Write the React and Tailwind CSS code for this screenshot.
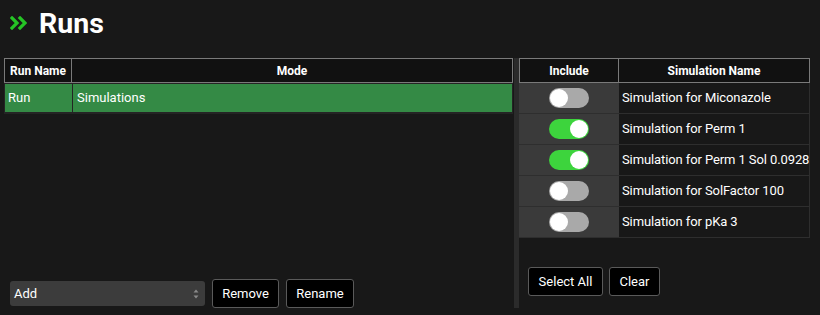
import React from "react";

const sims = [
  { name: "Simulation for Miconazole", on: false },
  { name: "Simulation for Perm 1", on: true },
  { name: "Simulation for Perm 1 Sol 0.0928", on: true },
  { name: "Simulation for SolFactor 100", on: false },
  { name: "Simulation for pKa 3", on: false },
];

function Toggle({ on }) {
  return (
    <div
      className={
        on
          ? "w-[40px] h-[20px] rounded-full bg-[#3dd43d] flex items-center justify-end px-[1px]"
          : "w-[40px] h-[20px] rounded-full bg-[#a9a9a9] flex items-center justify-start px-[1px]"
      }
    >
      <div className="w-[18px] h-[18px] rounded-full bg-white" />
    </div>
  );
}

export default function App() {
  return (
    <div
      className="w-[820px] h-[315px] bg-[#181818] text-white flex flex-col overflow-hidden"
      style={{ fontFamily: "Roboto, 'Liberation Sans', sans-serif" }}
    >
      <div className="h-[58px] flex items-start pl-[10px] pt-[6px]">
        <svg width="17" height="14" viewBox="0 0 17 14" className="mt-[10px]">
          <polyline points="2,2 7,7 2,12" fill="none" stroke="#25c425" strokeWidth="3.2" strokeLinecap="square" strokeLinejoin="miter" />
          <polyline points="10,2 15,7 10,12" fill="none" stroke="#25c425" strokeWidth="3.2" strokeLinecap="square" strokeLinejoin="miter" />
        </svg>
        <h1 className="ml-[12px] text-[28.5px] leading-[36px] font-bold">Runs</h1>
      </div>
      <div className="flex">
        {/* Left panel */}
        <div className="ml-[4px] w-[509px] h-[250px] flex flex-col">
          <div className="h-[25px] flex border border-[#7a7a7a] bg-[#111111] text-[12px] font-bold">
            <div className="w-[67px] border-r border-[#7a7a7a] flex items-center justify-center">Run Name</div>
            <div className="flex-1 flex items-center justify-center">Mode</div>
          </div>
          <div className="flex gap-[1px] px-[1px] pt-[1px] pb-[2px] bg-[#242424] text-[13px]">
            <div className="w-[67px] h-[28px] bg-[#348a45] flex items-center pl-[3px]">Run</div>
            <div className="flex-1 h-[28px] bg-[#348a45] flex items-center pl-[4px]">Simulations</div>
          </div>
          <div className="flex-1" />
          <div className="flex items-center h-[29px] pl-[6px] gap-[7px] text-[13px]">
            <div className="w-[195px] h-[25px] bg-[#3c3c3c] rounded-[3px] flex items-center justify-between pl-[4px] pr-[6px]">
              <span>Add</span>
              <svg width="6" height="10" viewBox="0 0 6 10">
                <polygon points="3,0.5 5.5,3.5 0.5,3.5" fill="#8a8a8a" />
                <polygon points="3,9.5 5.5,6.5 0.5,6.5" fill="#8a8a8a" />
              </svg>
            </div>
            <button className="w-[67px] h-[29px] bg-black border border-[#5a5a5a] rounded-[3px] flex items-center justify-center">Remove</button>
            <button className="w-[68px] h-[29px] bg-black border border-[#5a5a5a] rounded-[3px] flex items-center justify-center">Rename</button>
          </div>
        </div>
        {/* Divider */}
        <div className="ml-[1px] w-[5px] h-[250px] bg-[#2b2b2b]" />
        {/* Right panel */}
        <div className="w-[291px] flex flex-col">
          <div className="h-[25px] flex border border-[#7a7a7a] bg-[#111111] text-[12px] font-bold">
            <div className="w-[99px] border-r border-[#7a7a7a] flex items-center justify-center">Include</div>
            <div className="flex-1 flex items-center justify-center">Simulation Name</div>
          </div>
          {sims.map((s) => (
            <div key={s.name} className="h-[31px] flex border-b border-[#2e2e2e] text-[13px]">
              <div className="w-[100px] shrink-0 bg-[#3a3a3a] flex items-center justify-center">
                <Toggle on={s.on} />
              </div>
              <div className="flex-1 min-w-0 bg-[#181818] border-r border-[#2e2e2e] flex items-center pl-[3px] whitespace-nowrap tracking-[-0.1px]">{s.name}</div>
            </div>
          ))}
          <div className="flex gap-[6px] pl-[9px] mt-[29px] text-[13px]">
            <button className="w-[75px] h-[29px] bg-black border border-[#5a5a5a] rounded-[3px] flex items-center justify-center">Select All</button>
            <button className="w-[51px] h-[29px] bg-black border border-[#5a5a5a] rounded-[3px] flex items-center justify-center">Clear</button>
          </div>
        </div>
      </div>
    </div>
  );
}
